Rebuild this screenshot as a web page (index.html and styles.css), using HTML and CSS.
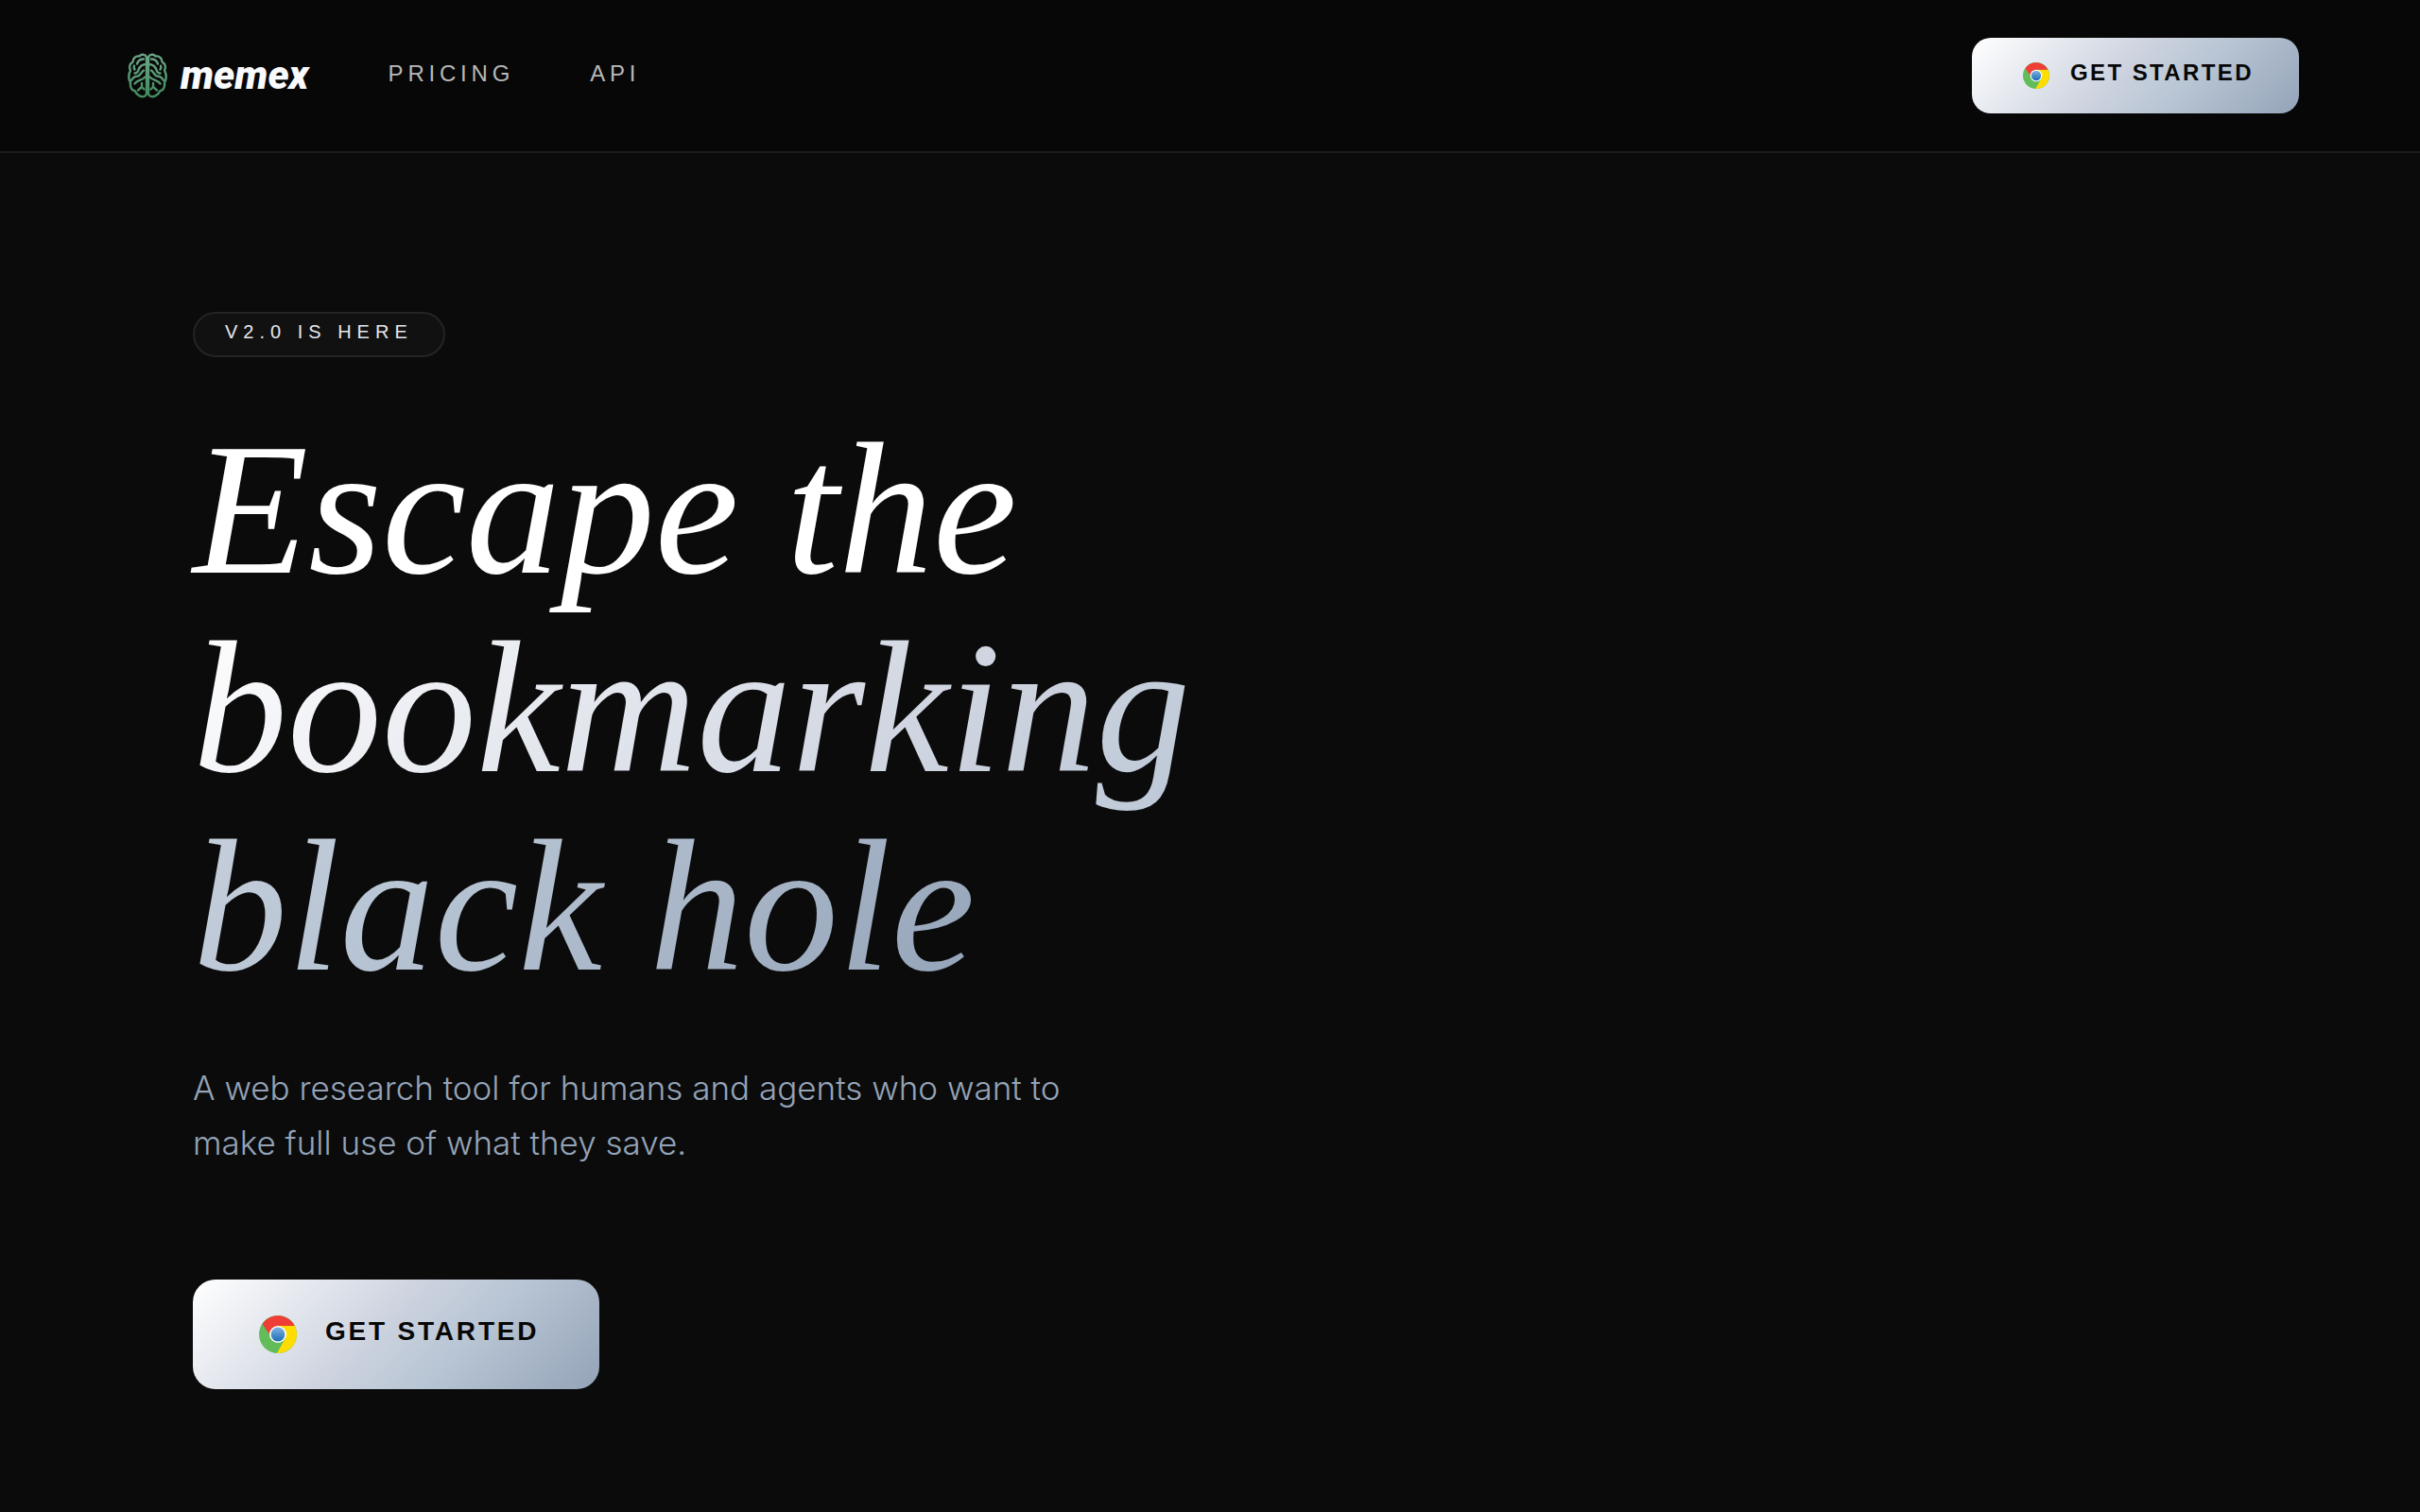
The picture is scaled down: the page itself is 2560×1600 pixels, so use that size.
FILE: index.html
```html
<!DOCTYPE html>
<html lang="en">
<head>
  <meta charset="UTF-8" />
  <meta name="viewport" content="width=device-width, initial-scale=1.0"/>
  <title>Memex</title>
  <link rel="stylesheet" href="styles.css">
</head>
<body>
  <header class="site-header">
    <a class="logo" href="#">
      <svg class="logo-mark" viewBox="0 0 42 48" fill="none" stroke="url(#brain)" stroke-width="2.4" stroke-linecap="round" stroke-linejoin="round" aria-hidden="true">
        <defs>
          <linearGradient id="brain" gradientUnits="userSpaceOnUse" x1="0" y1="0" x2="0" y2="48">
            <stop offset="0" stop-color="#6fa88a"/>
            <stop offset="1" stop-color="#3f8a5c"/>
          </linearGradient>
          <g id="brain-half">
            <path d="M20 4.500C19 1.500 15 .8 12.500 3.500C8.500 2.800 5.500 6 5.500 9.500C2 11.500 1.500 15.500 3 18.500C1 22.500 1 28 3 31.500C2.500 36 4.500 39.500 8 40.500C9.500 45 15 47.500 18.500 45.500C19.700 44.800 20 44 20 42.500V4.500"/>
            <path d="M17 6.500C13.500 6.500 11 8.500 10 11.500"/>
            <path d="M20 12C15 12 12.500 15 11.500 18C11 20 9.500 21.500 7.500 21.500"/>
            <path d="M7 13.500C6.300 15 6.500 16 7.500 17.500"/>
            <path d="M4 29C6 25.500 8.500 24.500 11 24.500C13.500 24 14.500 20 17 18.500"/>
            <path d="M18.500 25.500C14.500 29.500 10.500 28.500 7.500 32.500"/>
            <path d="M15 32V36L11 39.500M15 36L17.500 38.500"/>
          </g>
        </defs>
        <use href="#brain-half"/>
        <use href="#brain-half" transform="translate(42 0) scale(-1 1)"/>
      </svg>
      <span class="logo-name">memex</span>
    </a>
    <nav class="nav-links">
      <a href="#">PRICING</a>
      <a href="#">API</a>
    </nav>
    <button class="cta cta-small" type="button">
      <svg class="chrome-icon" viewBox="0 0 40 40" aria-hidden="true">
        <defs>
          <linearGradient id="chrome-blue" x1="0" y1="0" x2="0" y2="1">
            <stop offset="0" stop-color="#7eb1e0"/>
            <stop offset="1" stop-color="#1c6eb8"/>
          </linearGradient>
        </defs>
        <circle cx="20" cy="20" r="20" fill="#63bc5a"/>
        <path d="M20 11H37.800A20 20 0 0 1 19 40L28 24Z" fill="#ffdd00"/>
        <path d="M3.500 9A20 20 0 0 1 37.800 11H20L11 20Z" fill="#ee3e36"/>
        <circle cx="20" cy="20" r="9" fill="#fff"/>
        <circle cx="20" cy="20" r="7.400" fill="url(#chrome-blue)"/>
      </svg>
      <span class="cta-label">GET STARTED</span>
    </button>
  </header>
  <main class="hero">
    <div class="badge">V2.0 IS HERE</div>
    <h1>Escape the<br><span class="fade">bookmarking black hole</span></h1>
    <p class="lead">A web research tool for humans and agents who want to make full use of what they save.</p>
    <button class="cta cta-large" type="button">
      <svg class="chrome-icon" viewBox="0 0 40 40" aria-hidden="true">
        <circle cx="20" cy="20" r="20" fill="#63bc5a"/>
        <path d="M20 11H37.800A20 20 0 0 1 19 40L28 24Z" fill="#ffdd00"/>
        <path d="M3.500 9A20 20 0 0 1 37.800 11H20L11 20Z" fill="#ee3e36"/>
        <circle cx="20" cy="20" r="9" fill="#fff"/>
        <circle cx="20" cy="20" r="7.400" fill="url(#chrome-blue)"/>
      </svg>
      <span class="cta-label">GET STARTED</span>
    </button>
  </main>
</body>
</html>
```
FILE: styles.css
```css
* { box-sizing: border-box; }
body {
  margin: 0;
  background-color: #0b0b0b;
  color: #fff;
  font-family: "Liberation Sans", Arial, sans-serif;
}
.site-header {
  display: flex;
  align-items: center;
  padding: 40px 128px;
  background-color: #070707;
  border-bottom: 2px solid #1b1b1b;
}
.logo {
  display: flex;
  align-items: center;
  gap: 14px;
  margin-left: 7px;
  color: #f8fafc;
  text-decoration: none;
}
.logo-mark {
  width: 42px;
  height: 48px;
}
.logo-name {
  font-family: Roboto, sans-serif;
  font-size: 42px;
  line-height: 48px;
  font-weight: 900;
  font-style: italic;
}
.nav-links {
  display: flex;
  gap: 80px;
  margin-left: 84px;
  padding-bottom: 4px;
}
.nav-links a {
  color: #b8b8b8;
  font-size: 24px;
  line-height: 32px;
  letter-spacing: 0.2em;
  text-decoration: none;
}
.cta {
  display: flex;
  align-items: center;
  border: none;
  background: linear-gradient(135deg, #ffffff 0%, #cdd3df 45%, #b8c5d4 65%, #94a3b8 100%);
  color: #070707;
  font-family: inherit;
  font-weight: bold;
  letter-spacing: 0.1em;
  cursor: pointer;
}
.cta-small {
  gap: 16px;
  height: 80px;
  margin-left: auto;
  padding: 0 48px;
  border-radius: 20px;
  font-size: 24px;
}
.cta-large {
  gap: 24px;
  height: 116px;
  padding: 0 64px;
  border-radius: 24px;
  font-size: 28px;
}
.chrome-icon {
  width: 28px;
  height: 28px;
  margin: 0 6px;
}
.cta-large .chrome-icon {
  width: 40px;
  height: 40px;
}
.cta-label {
  padding-bottom: 6px;
}
.hero {
  display: flex;
  flex-direction: column;
  align-items: flex-start;
  padding: 168px 204px 120px;
}
.badge {
  padding: 5px 32px 11px;
  border: 2px solid #242424;
  border-radius: 24px;
  background-color: #111;
  color: #e5e7eb;
  font-size: 20px;
  line-height: 28px;
  letter-spacing: 0.3em;
}
h1 {
  max-width: 1092px;
  margin: 56px 0 58px;
  font-family: "Liberation Serif", "Times New Roman", serif;
  font-size: 200px;
  line-height: 210px;
  font-weight: normal;
  font-style: italic;
}
/* inline, so the gradient runs on from one line into the next */
.fade {
  background: linear-gradient(135deg, #ffffff 0%, #cdd3df 45%, #b8c5d4 65%, #94a3b8 100%);
  -webkit-background-clip: text;
  background-clip: text;
  color: transparent;
}
.lead {
  max-width: 960px;
  margin: 0 0 116px;
  color: #94a3b8;
  font-family: Inter, "Liberation Sans", sans-serif;
  font-size: 35px;
  line-height: 58px;
  font-weight: 300;
}
```
